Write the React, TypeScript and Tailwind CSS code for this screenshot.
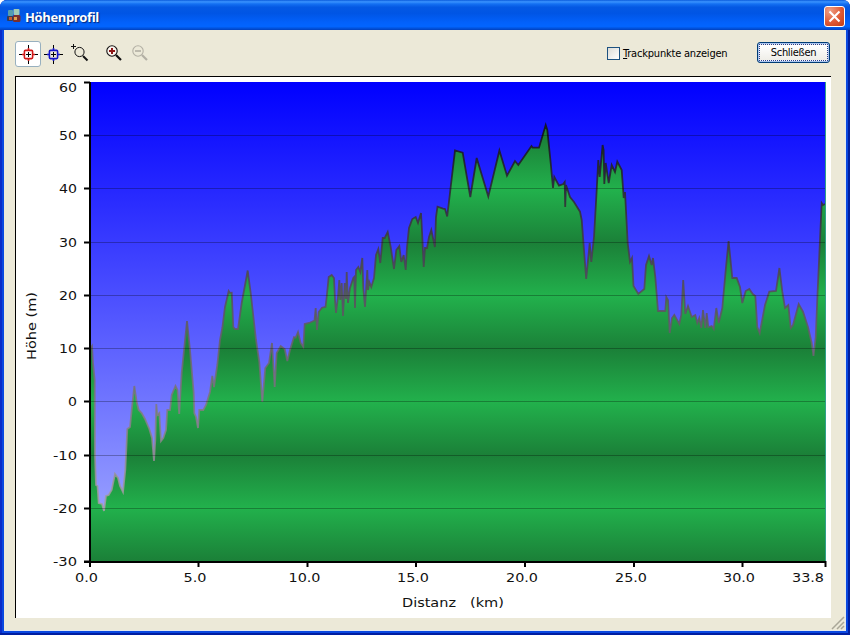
import React from 'react';

// [x, y] in chart pixels, plot area spans 90..825 x 82..561
const PROFILE = `
90,349 92,346 93,363 94.7,380 95,457 96,485 97.5,486 98.7,503 102,504 104,511 106,496 108.7,495 111.7,490 115,474
118,478 120,486 123,492 125.3,470 127.3,429 130,427 131.7,410 134.3,386 136.7,402 138.7,410 141.7,413 145,419
149.3,429 152,438 154,461 155.3,440 156.3,404 157.3,415 159.3,413 161,441 163.3,438 166,430 167.3,410 170,410
171.7,395 175.5,386 177.5,390 179.2,414 181.7,373 187,321 190,350 193.7,393 194.3,413 196,417 198,428 199.3,410
203.3,410 206,405 210,392 212.3,376 214,387 217.3,365 220,340 222.3,328 225,307 228.7,291 230,293 231.7,292.7
233.3,327 235,329 238,329 241.7,303 247.7,270.5 250.7,293 256,340 259.3,362 262.3,402 265.3,368 269,363 272,343
274.7,387 276.7,353 280.7,346 284.7,349 287.3,361 290,350 294,337 295.7,337.5 298,332 300.7,343 303.3,347 304.7,324
309,323 314.5,320.5 315.7,308 317,330 318.7,312 322,307.7 325.5,307 326.7,297 328.7,277 331.7,275 334,278 335,300
336,313 338,297 339.3,280 340.3,300 341.7,283 343,316 344.7,283 346,299 346.7,272 348,303 350,288 353.3,278
354.2,277 355,308 356,270 358.3,267 360.3,272 362.3,258 363.3,288 365,307 367.3,270 368,290 369.3,282 371.3,287
374,278 376,255 378.3,249 380.3,263 382.7,238 384.7,238 387.7,232 390.7,247 394,269 396.3,250 399.3,246 401.3,262
403.7,255 405.7,270 407,247 409,228 412.3,219 415.7,217 418,223 421,213 422.3,237 423.7,267 425,248 427,248 429,237
431.3,230 434.9,247 436,217 437.5,206.7 443,208.7 445,209 447.2,216.5 450,193 455,150.5 462.7,152.7 470.3,197
476.7,158 488.3,196.5 499.4,150.5 507,175.7 515,161 518.3,165 531.5,146 532.7,147.7 539,147.7 545.7,125 547.3,130
550.7,163 553,188 554.3,177 559,185.7 563.3,184 564.7,182 565.2,207 566,185 570,197 574,202 580,211.7 581.7,220
586.2,279 589.7,243 591.3,262 594,237 596.7,190 598.3,160 599.7,177 602.6,145 603.6,150 604.3,184 605.7,163
608.7,183 611.7,165 615,172 617.3,161.7 621.7,170 623.7,198 625,192 627.7,243 630,262 632,258 633.5,286 638.3,294
644.3,289 646,265 649,256 651.7,265 653,258 655.3,277 658,311 665.3,311 666.3,297 668,300 669.7,333 672,318
674.3,315 679.3,324 681.3,315 683.2,280 685.3,314 688,306 691.7,317 695.3,315 697.3,323 699.3,318 701.3,328
703,310 705.3,328 706.7,313 708.3,327 711.7,326 713.7,329 716.3,308 718.7,323 722.3,308 726,267 728.6,241
732.3,278 736.7,278 740,287 742.3,303 745.7,291 749.3,289 752.7,294 755.3,296 757.3,327 759.7,333 765,305
769.3,291.7 776,291 779.4,268 782.3,291.7 785,308 788.3,305 790.7,328 793,325 798.7,304 803,311.7 808,327
811.7,343 813.5,356 815.7,337 817.7,290 821.7,203 823,205 825,204`.trim();

const Y_TICKS = [
  { value: 60, y: 82, width: 18 },
  { value: 50, y: 135, width: 18 },
  { value: 40, y: 188, width: 18 },
  { value: 30, y: 242, width: 18 },
  { value: 20, y: 295, width: 18 },
  { value: 10, y: 348, width: 18 },
  { value: 0, y: 401, width: 9 },
  { value: -10, y: 455, width: 24 },
  { value: -20, y: 508, width: 24 },
  { value: -30, y: 561, width: 24 },
];

const X_TICKS = [
  { label: '0.0', x: 90, textX: 75, width: 23 },
  { label: '5.0', x: 198.5, textX: 183.5, width: 23 },
  { label: '10.0', x: 307.5, textX: 288.5, width: 32 },
  { label: '15.0', x: 416, textX: 397, width: 32 },
  { label: '20.0', x: 525, textX: 506, width: 32 },
  { label: '25.0', x: 634, textX: 615, width: 32 },
  { label: '30.0', x: 742.5, textX: 723, width: 32 },
  { label: '33.8', x: 825.5, textX: 792, width: 32 },
];

const Crosshair: React.FC<{ color: string }> = ({ color }) => (
  <svg className="w-[20px] h-[20px] -ml-px -mt-px" viewBox="0 0 20 20" fill="none">
    <path d="M10.5 1v5M10.5 15v5M1 10.5h5M15 10.5h5" stroke="#000" shapeRendering="crispEdges" />
    <path d="M10.5 4v2M10.5 15v2M4 10.5h2M15 10.5h2" stroke={color} strokeWidth={1.6} />
    <rect x="6.4" y="6.4" width="8.2" height="8.2" rx="1" stroke={color} strokeWidth={1.6} />
    <path d="M10.5 8v5M8 10.5h5" stroke="#000" shapeRendering="crispEdges" />
  </svg>
);

const SelectZoomIcon = () => (
  <svg className="w-[20px] h-[20px]" viewBox="0 0 20 20" fill="none" stroke="#111">
    <path d="M3.5 1v5M1 3.5h5" shapeRendering="crispEdges" />
    <circle cx="9.5" cy="9" r="4.6" />
    <path d="M13 13l4.5 4.5" strokeWidth={2} />
  </svg>
);

const ZoomIcon: React.FC<{ stroke: string; sign: string; plus?: boolean }> = ({ stroke, sign, plus }) => (
  <svg className="w-[20px] h-[20px]" viewBox="0 0 20 20" fill="none">
    <circle cx="8" cy="8" r="5.2" stroke={stroke} strokeWidth={1.1} fill={plus ? '#fbf5ee' : 'none'} />
    <path d="M12 12l5 5" stroke={stroke} strokeWidth={2.2} />
    <path d={plus ? 'M8 5v6M5 8h6' : 'M5 8h6'} stroke={sign} strokeWidth={plus ? 2 : 1.4} />
  </svg>
);

const TitleBar = () => (
  <div className="h-[30px] shrink-0 flex items-center pl-[7px] pr-[5px] rounded-t-[7px] bg-[linear-gradient(to_bottom,#0a5bdc_0%,#3a93ff_6%,#1470f2_13%,#0458e3_24%,#0055e5_45%,#0261fb_75%,#0265ff_88%,#0154e0_94%,#0140bd_100%)]">
    <svg className="w-[14px] h-[14px] mt-[2px]" viewBox="0 0 14 14">
      <rect x="1" y="1" width="5" height="6" rx="1" fill="#559db0" />
      <rect x="6.5" y="0" width="6" height="6" rx="1" fill="#a1cbb4" />
      <rect x="0" y="7" width="6" height="5" rx="1" fill="#343d57" />
      <rect x="2" y="8" width="3" height="3" fill="#c55b32" />
      <rect x="6" y="6" width="7.5" height="7" rx="1.5" fill="#7c2f2c" />
      <rect x="7" y="8" width="3" height="3" fill="#dfa24c" />
    </svg>
    <span className="ml-[4px] mt-[3px] font-['Open_Sans','Noto_Sans',sans-serif] font-bold text-[13px] leading-[20px] tracking-[-0.37px] text-white [text-shadow:1px_1px_1px_#05287c]">
      Höhenprofil
    </span>
    <button className="ml-auto mt-[2px] w-[21px] h-[21px] border border-white rounded-[3px] flex items-center justify-center bg-[radial-gradient(circle_at_25%_20%,#ef9f85,#e05a35_55%,#c23c13)]">
      <svg className="w-[13px] h-[13px]" viewBox="0 0 13 13" stroke="#fff" strokeWidth={2.1}>
        <path d="M1.5 1.5l10 10M11.5 1.5l-10 10" />
      </svg>
    </button>
  </div>
);

const Toolbar = () => (
  <div className="h-[46px] shrink-0 flex items-center pl-[11px] pr-[15px] font-['DejaVu_Sans_Condensed','DejaVu_Sans',sans-serif] text-[11px] text-black">
    <button className="w-[26px] h-[26px] mt-[2px] flex items-center justify-center bg-white border border-[#98b0bf] rounded-[3px]">
      <Crosshair color="#d01818" />
    </button>
    <button className="w-[25px] h-[26px] mt-[2px] flex items-center justify-center">
      <Crosshair color="#1414c8" />
    </button>
    <button className="w-[27px] h-[26px] flex items-center justify-center">
      <SelectZoomIcon />
    </button>
    <button className="ml-[8px] w-[26px] h-[26px] flex items-center justify-center">
      <ZoomIcon stroke="#111" sign="#8d1616" plus />
    </button>
    <button className="w-[26px] h-[26px] flex items-center justify-center">
      <ZoomIcon stroke="#b3b0a4" sign="#aaa79b" />
    </button>
    <label className="ml-auto flex items-center">
      <span className="w-[13px] h-[13px] border border-[#1d5281] bg-[linear-gradient(135deg,#dcdcd7,#fff)]" />
      <span className="ml-[3px] mt-[3px] w-[105px] whitespace-nowrap tracking-[-0.2px]">
        <span className="underline">T</span>rackpunkte anzeigen
      </span>
    </label>
    <button className="ml-[29px] w-[73px] h-[21px] -mt-px border border-[#003c74] rounded-[3px] p-px bg-[#a9c4f0]">
      <span className="flex w-full h-full items-center justify-center pt-px border border-dotted border-[#283c8c] bg-[linear-gradient(to_bottom,#fff,#efeee8)] tracking-[-0.3px]">
        Schließen
      </span>
    </button>
  </div>
);

const ProfileChart = () => (
  <svg
    className="block w-[815px] h-[541px]"
    viewBox="16 77 815 541"
    fontFamily="'DejaVu Sans', Verdana, sans-serif"
    fontSize="13"
    fill="#111"
  >
    <defs>
      <linearGradient id="sky" gradientUnits="userSpaceOnUse" x1="0" y1="82" x2="0" y2="561">
        <stop offset="0" stopColor="#0000ff" />
        <stop offset="1" stopColor="#a8b0ff" />
      </linearGradient>
      <linearGradient id="ground" gradientUnits="userSpaceOnUse" x1="0" y1="402" x2="0" y2="455" spreadMethod="reflect">
        <stop offset="0" stopColor="#22b14c" />
        <stop offset="1" stopColor="#1b8038" />
      </linearGradient>
      <linearGradient id="outline" gradientUnits="userSpaceOnUse" x1="0" y1="82" x2="0" y2="561">
        <stop offset="0" stopColor="#000" />
        <stop offset="0.4" stopColor="#504650" />
        <stop offset="1" stopColor="#b8b4b8" />
      </linearGradient>
    </defs>

    <rect x="90" y="82" width="735" height="480" fill="url(#sky)" />
    <polygon points={`90,562 ${PROFILE} 825,562`} fill="url(#ground)" />
    <polyline points={PROFILE} fill="none" stroke="url(#outline)" strokeWidth="1.8" strokeOpacity="0.85" />

    {Y_TICKS.map(({ value, y, width }) => (
      <g key={value}>
        {value < 60 && value > -30 && (
          <path d={`M90 ${y + 0.5}H825`} stroke="#000" strokeOpacity="0.28" />
        )}
        <path d={`M84 ${y + 0.5}h6`} stroke="#000" strokeWidth="2" />
        <text
          x={77 - width}
          y={y + (value === 60 ? 9.5 : 4.5)}
          textLength={width}
          lengthAdjust="spacingAndGlyphs"
        >
          {value}
        </text>
      </g>
    ))}

    <path d="M90 82V567M84 562H826" stroke="#000" strokeWidth="2" fill="none" />
    <path d="M825.5 82V561" stroke="#2fa08a" />
    {X_TICKS.map(({ label, x, textX, width }) => (
      <g key={label}>
        <path d={`M${x} 561v6`} stroke="#000" strokeWidth="2" />
        <text x={textX} y="581.5" textLength={width} lengthAdjust="spacingAndGlyphs">
          {label}
        </text>
      </g>
    ))}

    <text x="402" y="606.5" textLength="54" lengthAdjust="spacingAndGlyphs">Distanz</text>
    <text x="470" y="606.5" textLength="34" lengthAdjust="spacingAndGlyphs">(km)</text>
    <text transform="translate(36 360) rotate(-90)" textLength="68" lengthAdjust="spacingAndGlyphs">
      Höhe (m)
    </text>
  </svg>
);

const App: React.FC = () => {
  return (
    <div className="w-[850px] h-[635px] bg-white overflow-hidden">
      <div className="w-full h-full flex flex-col rounded-t-[7px] bg-[#0a48e0] shadow-[inset_-2px_-2px_0_#001ea0,inset_2px_0_0_#0a2cc8]">
        <TitleBar />
        <div className="relative grow flex flex-col mx-[4px] mb-[4px] bg-[#ece9d8] border-r border-b border-[#e3e8ed]">
          <Toolbar />
          <div className="ml-[11px] w-[816px] h-[542px] border-t border-l border-black bg-white">
            <ProfileChart />
          </div>
          <svg className="absolute right-0 bottom-0 w-[14px] h-[14px]" viewBox="0 0 14 14" stroke="#aaa798" strokeWidth={1.5}>
            <path d="M1 13L13 1M6 13l7-7M10 13l3-3" />
          </svg>
        </div>
      </div>
    </div>
  );
};

export default App;
